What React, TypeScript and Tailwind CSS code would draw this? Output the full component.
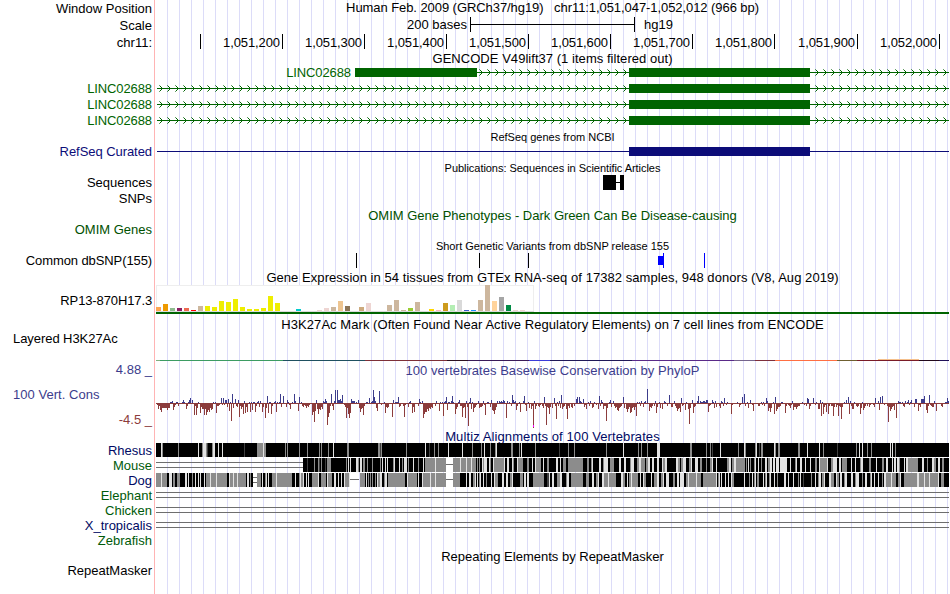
import type { ReactNode } from "react"

const TRACK_WIDTH = 793

const shades: Record<string, string> = { K: "#000000", G: "#8c8c8c", L: "#e2e2e2", D: "#404040" }

// run starts in px, each followed by its shade; "." leaves a gap
const rhesus =
  "0K 5L 6G 7K 22G 23K 42L 43K 46G 47L 50G 51D 52K 56G 57L 59K 62L 63K 66L 67K 88D 89K 101G 107L 108G 110K 129G 130K 131G 132K 143G 144K 151G 152K 163G 164K 165G 166K 172G 173K 177L 178K 191G 193K 222G 224D 225G 226K 250G 251K 269L 270K 273D 274K 278G 279K 282G 283K 292L 293K 306L 307K 316G 317K 325G 326K 328L 329K 334G 335K 339G 340L 341K 355G 357K 363G 364K 365L 366K 379G 380K 403D 404K 412G 413K 418G 419K 450G 451K 467L 468K 482G 483K 485G 486K 491G 492K 501L 504K 534G 536K 550G 551K 554G 555K 556D 557K 564L 565K 582G 583K 588L 589G 590K 599G 600L 601K 603D 604K 605G 607K 618L 619G 620K 622G 624K 642G 644K 651L 652K 663L 664K 667G 668K 681D 682K 700G 701K 703L 704K 706L 707K 711G 712K 715G 716K 734L 735K 736L 737K 739G 740K"
const mouse =
  "147K 151D 152K 158G 159K 162G 163D 164K 165G 166K 169D 170K 171G 175K 190G 191K 192L 193K 194L 195K 200L 202G 203K 204L 206K 207G 209K 211G 212K 216G 217K 224G 225K 226L 227K 229L 230K 231L 232K 237G 238L 239K 243L 244K 246G 247K 248L 251K 252G 253K 257L 258K 262G 263K 267L 268K 269G 279L 280G 290. 297G 304L 305G 310L 311G 315L 316G 320K 321G 322K 323G 324K 326L 327G 328L 331K 333L 334G 335K 337L 338G 348L 349K 351L 353K 356L 357G 358K 361L 362G 367K 371G 373K 376L 377K 379L 380G 385K 387L 388K 391G 393K 400L 402K 404L 405K 407G 410K 412G 427K 431G 433K 435G 436L 437K 443L 445K 447G 448L 452K 454G 458K 463L 465K 468L 470K 474G 475L 478K 481G 483L 485G 489K 490G 492L 494K 496L 498K 501L 503K 506L 507G 509L 511K 520L 522G 524K 525G 527L 530K 533G 535L 536K 539L 542K 544G 546K 550G 551K 554G 556L 557K 560L 561K 571G 573L 575K 576G 578L 580G 589K 590G 591K 592L 593K 594G 595K 598G 599L 600K 602L 603K 605G 606K 609L 611K 612G 614L 616K 617L 619K 620L 623K 624L 631K 634L 635K 639G 640L 641K 644L 646K 649L 650K 654L 655K 659G 661K 663L 664G 671L 672K 675G 677L 681K 683L 685K 686G 691K 695L 696K 699L 700K 704G 705L 707K 713G 715K 720L 721K 726G 728K 730L 732K 736L 737K 738L 740K 741L 743G 744K 748L 749K 750L 752G 762K 766L 768K 771G 772K 776L 778G 780K 782L 784K 786G 788K"
const dog =
  "0G 5L 6G 11K 13L 16K 17G 19K 21G 24K 29L 31K 32L 33K 36G 37K 39L 40K 42L 43K 44L 45K 48L 49K 50G 54L 55G 60L 61G 71K 73L 74G 77L 78G 81L 82G 90K 91L 93K 94G 95K 97. 101G 105K 106L 107K 109G 110L 111K 112L 113K 116G 120L 121G 136K 139L 140K 143G 144L 145G 147L 148K 150L 151K 152L 153K 156G 162L 163K 165G 170K 171L 172G 176K 178L 180K 182L 183K 185L 186K 188L 189G 193L 194. 204G 209K 210L 211K 212G 213K 214G 215K 216G 217K 219G 220K 221L 222G 224L 226K 228G 229L 231K 232G 249K 251L 252G 261K 262L 263K 266L 267G 274L 275G 279L 280G 290. 297G 304K 310L 311K 313L 315K 317G 319L 320K 321L 322K 323G 324L 325K 327L 328K 330G 331K 335L 336K 338L 339G 342K 346L 348K 350L 352K 354G 356L 357K 364G 367K 368L 370K 371L 373K 377G 388K 391D 393L 394K 396L 398K 401G 404L 406K 410G 411L 413K 415G 419G 427K 430G 433K 436L 438K 440G 442L 443K 446L 448G 452L 453G 460K 465L 467G 469K 471L 472K 473G 475L 476G 482K 484L 485K 487L 488G 490K 495L 496K 498G 501L 503K 505G 507L 508K 510L 513K 517G 519K 521L 523K 524L 528K 530G 532L 533G 540L 541G 545K 547G 560L 561K 562G 563L 564K 565L 566K 569L 570K 572L 573K 575L 576G 578K 588L 589K 593G 594K 596L 597K 598G 599L 600K 601G 603K 607L 608K 609G 610L 611K 613G 614L 615K 618L 619K 621G 622K 628L 630K 632L 633K 637L 638K 642G 643K 644L 645K 647D 648K 655G 656K 659L 660K 662G 663L 665K 666G 668L 669K 673L 675G 678K 680L 681G 683K 684L 686K 688G 689L 691K 695L 697K 699G 700L 703K 706G 707K 709L 711K 714G 715L 716K 718L 719K 722L 723K 726G 727K 728L 730G 735L 736G 740K 742G 744L 745K 748G 761L 763G 768L 769G 773L 774G 782L 783K 785G 788K"

// basewise conservation score, px:height, negative is drawn downwards
const phylop =
  "1:-2 2:-6 3:-3 4:-7 5:-9 6:-5 7:-5 8:-5 9:-5 10:-5 11:-7 12:-5 13:-5 14:1 15:1 16:2 17:-7 18:-4 19:-2 20:1 21:1 22:-3 26:1 27:3 28:1 30:-6 31:-3 32:1 33:3 34:5 36:3 38:-12 39:-3 40:-12 41:-5 42:1 44:-10 45:-4 46:-6 47:-6 48:-12 49:-6 50:-12 51:-9 52:-7 53:-9 54:-5 55:-7 56:-6 57:1 59:1 60:-10 61:-3 62:-3 63:-2 65:5 66:-2 67:5 68:-2 69:3 70:3 71:-4 72:4 73:-8 74:1 75:-18 76:9 77:-5 79:4 80:-3 81:-4 82:3 83:-14 84:-3 85:-6 86:-4 87:-11 88:2 89:-10 90:-4 91:-9 93:1 94:-9 95:1 96:-7 97:1 98:1 99:-9 100:-3 101:1 102:2 103:-4 104:2 106:-9 107:-4 109:-15 110:-5 111:7 112:-10 113:1 114:1 115:-11 116:-3 118:1 119:2 120:-9 121:1 123:1 124:9 125:-4 127:7 130:-4 131:3 132:1 133:-2 134:-6 136:1 138:9 139:2 142:-8 143:6 145:1 146:-3 147:-4 148:-2 149:-3 150:-5 151:-3 152:-4 153:-2 156:-12 157:-9 158:-19 159:-8 160:3 161:-6 162:-11 163:-6 164:-7 165:-4 166:-6 167:2 168:1 169:4 170:2 171:-22 172:-14 173:-10 174:-3 175:9 176:-3 177:-7 178:2 179:13 181:13 182:3 183:3 184:4 185:2 186:8 188:-2 189:-4 190:-15 191:-5 192:-11 193:-15 194:-10 195:4 196:2 197:2 198:2 200:1 202:3 203:-5 204:-9 205:-6 206:-5 207:-12 208:-3 210:1 211:1 213:5 215:1 216:2 217:13 218:6 219:2 220:-5 221:-8 223:12 225:-2 228:1 229:-10 230:-4 231:-5 232:-4 236:-14 237:3 239:1 240:1 241:1 242:6 243:-4 244:-3 247:-3 248:-14 249:-2 252:-4 253:1 254:2 256:-10 257:-4 258:-9 262:-3 263:4 264:1 266:2 267:-15 268:-11 269:-9 270:-9 271:-6 272:-8 273:-5 274:-6 275:-4 276:-5 279:-3 280:2 283:-8 284:1 286:1 287:-13 288:1 289:2 290:6 291:-7 292:1 293:1 295:2 296:7 297:1 299:-11 300:-6 301:-4 302:1 303:3 304:-3 305:-3 306:-14 307:-5 308:-4 309:-15 310:2 311:-4 312:-23 313:1 314:5 315:-6 316:1 317:-9 318:-5 319:-4 320:-2 322:2 323:-5 324:-4 325:-4 326:-3 327:2 328:-2 329:-12 331:1 332:1 334:-4 335:3 336:-7 337:-8 338:-11 339:-7 340:-4 341:2 343:2 344:1 345:2 346:1 347:3 348:2 350:-15 351:2 353:1 355:-3 356:8 357:3 358:1 359:2 360:-7 361:-3 363:1 364:-9 367:2 368:7 369:-2 370:-8 372:1 373:-5 375:-6 376:-3 377:-25 378:2 379:-6 380:-3 382:-3 383:-4 384:-2 386:-3 387:-5 388:6 389:-3 390:-22 391:-4 392:-5 393:-11 394:-4 396:-5 398:5 399:-3 400:-16 401:1 402:-3 403:2 404:-5 405:8 406:-6 407:-4 408:-3 410:-6 411:-16 412:-3 413:-5 415:-4 416:-5 418:-3 420:4 421:6 423:6 424:2 425:1 427:4 428:-4 429:-2 430:-6 432:1 433:-3 434:2 436:-5 437:-4 438:1 440:-2 442:-6 443:7 444:-3 445:3 446:1 447:-6 448:-3 449:-3 450:-18 451:-5 453:1 454:3 455:-4 457:2 458:-3 459:-5 460:-4 461:-7 462:-8 463:-5 464:-4 465:-3 467:6 468:-5 470:-6 471:-9 472:-6 473:-4 474:-10 475:-9 476:-5 477:-4 478:-7 479:-4 480:-13 481:1 483:1 484:-3 485:2 487:-4 488:1 489:2 491:14 493:-8 494:-4 495:-5 496:-3 498:-3 499:2 500:-10 501:-4 503:1 504:-5 506:-6 508:2 509:1 511:-3 513:8 515:-4 516:-4 518:2 519:-3 520:-5 521:-8 522:-6 523:-5 524:-9 525:5 526:-3 527:-2 529:-7 530:1 532:-6 533:-21 534:-5 536:3 537:-10 538:-4 539:-3 541:2 542:7 544:2 545:1 546:1 547:2 548:2 549:1 550:3 551:3 552:-9 553:-3 554:-2 556:3 557:1 558:-5 559:2 560:-4 563:-3 564:-5 565:2 566:1 567:-3 568:5 570:-2 571:1 575:-11 576:-2 581:1 583:-4 584:-2 586:6 588:9 589:-3 591:1 592:-5 594:3 596:-2 597:-8 602:-3 603:-3 605:1 606:-2 607:1 608:-3 610:5 611:2 612:-8 613:-5 614:-9 615:-5 617:1 618:-11 619:6 620:-8 621:-6 622:-4 623:-4 624:-3 625:1 626:1 629:-10 630:-3 632:-2 633:-3 634:-5 635:-2 636:2 637:-7 638:-4 639:-4 640:-6 641:-4 642:-3 643:-3 646:1 648:-2 650:-3 651:5 652:4 653:-6 654:-3 657:5 659:-2 660:1 662:-6 663:-6 664:3 665:-13 666:1 667:-11 668:-4 669:-2 670:-9 672:-11 673:-3 675:-3 676:-3 677:-13 678:-4 680:-4 681:-2 682:-13 683:-3 684:-4 685:-16 686:-4 688:1 690:3 692:6 693:-11 694:2 695:-3 696:-6 697:-6 698:1 700:-3 701:-4 702:-3 704:-11 705:-5 706:1 707:-7 708:-5 709:-3 711:-3 713:-4 714:-2 717:-2 718:-4 719:5 722:2 723:-7 724:6 726:7 728:-2 731:-3 732:-19 733:-4 734:-8 735:-6 736:-4 737:-3 738:-7 740:-15 742:2 743:1 744:1 746:1 747:-3 748:-4 749:2 751:1 752:3 753:-2 754:1 755:3 758:-4 759:4 760:4 762:-8 763:-2 764:-4 765:4 766:4 767:4 768:7 770:-7 771:-10 772:-3 773:8 774:-2 775:-3 776:-4 777:-4 778:2 780:-8 785:-3 786:-4 789:1 790:1 791:5 792:2"

const tissues: [number, string][] = [
  [4, "#ffa54f"], [7, "#ee9a00"], [3, "#8fbc8f"], [3, "#8b1c62"], [3, "#ee6a50"], [1, "#ff0000"],
  [5, "#cdb79e"], [5, "#eeee00"], [4, "#eeee00"], [10, "#eeee00"], [9, "#eeee00"], [12, "#eeee00"],
  [4, "#eeee00"], [2, "#eeee00"], [2, "#eeee00"], [3, "#eeee00"], [15, "#eeee00"], [8, "#eeee00"],
  [0, "#eeee00"], [0, "#eeee00"], [2, "#00cdcd"], [0, "#ee82ee"], [0, "#9ac0cd"], [1, "#eed5d2"],
  [3, "#eed5d2"], [4, "#cdb79e"], [10, "#eec591"], [5, "#8b7355"], [0, "#8b7355"], [4, "#cdaa7d"],
  [8, "#eed5d2"], [0, "#b452cd"], [0, "#7a378b"], [6, "#cdb79e"], [11, "#cdb79e"], [1, "#cdb79e"],
  [3, "#9acd32"], [9, "#cdb79e"], [0, "#7a67ee"], [2, "#ffd700"], [1, "#ffb6c1"], [8, "#cd9b1d"],
  [6, "#b4eeb4"], [11, "#d9d9d9"], [1, "#3a5fcd"], [1, "#1e90ff"], [11, "#cdb79e"], [26, "#cdb79e"],
  [10, "#ffd39b"], [14, "#a6a6a6"], [6, "#008b45"], [1, "#eed5d2"], [1, "#eed5d2"], [0, "#ff00ff"],
]

const h3k27ac: [number, string][] = [
  [0, "#7fae7f"], [4, "#3d9c62"], [127, "#1f5060"], [209, "#7e3038"], [291, "#2c1020"], [312, "#3a1a58"],
  [373, "#3c3cd8"], [394, "#201858"], [476, "#5a2a88"], [578, "#75648c"], [599, "#7e2f3c"],
  [619, "#ff6f42"], [681, "#6f6030"], [701, "#7a1c28"], [763, "#22081c"], [783, "#201058"],
]

const ticks = [
  [126, "1,051,200"], [208, "1,051,300"], [290, "1,051,400"], [372, "1,051,500"], [454, "1,051,600"],
  [536, "1,051,700"], [618, "1,051,800"], [701, "1,051,900"], [783, "1,052,000"],
] as const

function Row({ label, height, className = "", children }: { label?: string; height: string; className?: string; children?: ReactNode }) {
  return (
    <div className={`flex ${height}`}>
      <div className={`flex w-[156px] shrink-0 items-center justify-end pr-1 ${className}`}>{label}</div>
      <div className="w-[793px]">{children}</div>
    </div>
  )
}

function Title({ children, height, className = "" }: { children: ReactNode; height: string; className?: string }) {
  return (
    <Row height={height}>
      <div className={`flex h-full items-center justify-center whitespace-pre ${className}`}>{children}</div>
    </Row>
  )
}

function Canvas({ height, children }: { height: number; children: ReactNode }) {
  return (
    <svg className="block overflow-visible" width={TRACK_WIDTH} height={height} shapeRendering="crispEdges">
      {children}
    </svg>
  )
}

function Gene({ introns, exons }: { introns: [number, number][]; exons: [number, number][] }) {
  return (
    <Canvas height={16}>
      {introns.map(([from, to]) => (
        <g key={from} fill="#006400">
          <rect x={from} y={7} width={to - from} height={1} />
          {Array.from({ length: 99 }, (_, i) => 6 + i * 8)
            .filter((x) => x - 3 >= from && x < to)
            .map((x) => (
              <g key={x}>
                <path d={`M${x - 2} 5h1v1h1v1h1v1h-1v1h-1v1h-1v-1h1v-1h1v-1h-1v-1h-1z`} />
                <path d={`M${x - 3} 4h1v1h-1zM${x - 3} 10h1v1h-1z`} opacity={0.6} />
              </g>
            ))}
        </g>
      ))}
      {exons.map(([from, to]) => (
        <rect key={from} x={from} y={3} width={to - from} height={9} fill="#006400" />
      ))}
    </Canvas>
  )
}

function Alignment({ data }: { data: string }) {
  const runs = data.split(" ").map((t) => ({ x: parseInt(t), shade: t.slice(-1) }))
  return (
    <>
      {runs.map(({ x, shade }, i) =>
        shade === "." ? null : (
          <rect key={x} x={x} y={0} width={(runs[i + 1]?.x ?? TRACK_WIDTH) - x} height={14} fill={shades[shade]} />
        ),
      )}
    </>
  )
}

function DoubleLine({ from = 0, to = TRACK_WIDTH }) {
  return (
    <>
      <rect x={from} y={4} width={to - from} height={1} fill="#6e6e6e" />
      <rect x={from} y={9} width={to - from} height={1} fill="#6e6e6e" />
    </>
  )
}

function Conservation() {
  return (
    <Canvas height={50}>
      <rect x={0} y={24} width={TRACK_WIDTH} height={1} fill="#8c3c3c" />
      {phylop.split(" ").map((t) => {
        const [x, v] = t.split(":").map(Number)
        return v > 0 ? (
          <rect key={x} x={x} y={24 - v} width={1} height={v} fill="#3c3c8c" />
        ) : (
          <rect key={x} x={x} y={24} width={1} height={-v} fill="#8c3c3c" />
        )
      })}
      <rect x={377} y={46} width={1} height={2} fill="#ff00ff" />
    </Canvas>
  )
}

export default function App() {
  return (
    <div className="flex h-[594px] w-[950px] overflow-hidden bg-white font-['Liberation_Sans',Arial,sans-serif] text-[13px] leading-none">
      <div className="w-[949px] bg-[linear-gradient(to_right,#fff_154px,#ffb4b4_154px,#ffb4b4_155px,#fff_155px,#fff_156px,transparent_156px),repeating-linear-gradient(to_right,transparent_0px,transparent_11px,#dcdcf8_11px,#dcdcf8_12px)]">
        {/* Base position */}
        <Row label="Window Position" height="h-[17px]">
          <div className="flex h-[15px] items-center justify-center tracking-[-0.07px] whitespace-pre">
            {"Human Feb. 2009 (GRCh37/hg19)   chr11:1,051,047-1,052,012 (966 bp)"}
          </div>
        </Row>
        <Row label="Scale" height="h-[17px]">
          <Canvas height={17}>
            <text x={311} y={12} textAnchor="end">200 bases</text>
            <path d="M314 0h1v7h163v-7h1v15h-1v-7h-163v7h-1z" />
            <text x={488} y={12}>hg19</text>
          </Canvas>
        </Row>
        <Row label="chr11:" height="h-[17px]">
          <Canvas height={17}>
            <rect x={44} y={0} width={1} height={15} />
            {ticks.map(([x, text]) => (
              <g key={x}>
                <rect x={x} y={0} width={1} height={15} />
                <text className="tracking-[-0.1px]" x={x - 2} y={13} textAnchor="end">{text}</text>
              </g>
            ))}
          </Canvas>
        </Row>

        {/* Genes */}
        <Title height="h-[14px]" className="tracking-[0.04px]">GENCODE V49lift37 (1 items filtered out)</Title>
        <Row height="h-4">
          <div className="flex">
            <div className="w-0 text-[#006400]">
              <div className="w-[195px] pt-[1px] text-right leading-[14px] tracking-[-0.1px]">LINC02688</div>
            </div>
            <Gene introns={[[321, 473], [654, 793]]} exons={[[199, 321], [473, 654]]} />
          </div>
        </Row>
        {[0, 1, 2].map((i) => (
          <Row key={i} label="LINC02688" height="h-4" className="pb-[2px] tracking-[-0.1px] text-[#006400]">
            <Gene introns={[[1, 793]]} exons={[[473, 654]]} />
          </Row>
        ))}
        <Title height="h-[15px]" className="pt-[2px] text-[11px]">RefSeq genes from NCBI</Title>
        <Row label="RefSeq Curated" height="h-4" className="pb-[2px] tracking-[-0.06px] text-[#0c0c78]">
          <Canvas height={16}>
            <rect x={1} y={7} width={792} height={1} fill="#0c0c78" />
            <rect x={473} y={3} width={181} height={9} fill="#0c0c78" />
          </Canvas>
        </Row>

        {/* Literature and variants */}
        <Title height="h-4" className="tracking-[-0.04px] text-[11px]">Publications: Sequences in Scientific Articles</Title>
        <Row label="Sequences" height="h-[14px]" className="pb-[2px]">
          <Canvas height={14}>
            <rect x={447} y={-1} width={13} height={15} />
            <rect x={460} y={6} width={4} height={1} />
            <rect x={464} y={-1} width={4} height={15} />
          </Canvas>
        </Row>
        <Row label="SNPs" height="h-[17px]" />
        <Title height="h-[17px]" className="text-[#005000]">OMIM Gene Phenotypes - Dark Green Can Be Disease-causing</Title>
        <Row label="OMIM Genes" height="h-[13px]" className="pb-[2px] text-[#005000]" />
        <Title height="h-[17px]" className="pt-[2px] text-[11px]">Short Genetic Variants from dbSNP release 155</Title>
        <Row label="Common dbSNP(155)" height="h-[14px]" className="pb-[2px] tracking-[-0.1px]">
          <Canvas height={14}>
            <rect x={200} y={-1} width={1} height={15} />
            <rect x={323} y={-1} width={1} height={15} />
            <rect x={372} y={-1} width={1} height={15} />
            <rect x={502} y={2} width={5} height={9} fill="#0000ff" />
            <rect x={507} y={-1} width={1} height={15} fill="#0000ff" />
            <rect x={548} y={-1} width={1} height={15} fill="#0000ff" />
          </Canvas>
        </Row>

        {/* Expression */}
        <Title height="h-[17px]" className="pt-[2px] tracking-[0.055px]">Gene Expression in 54 tissues from GTEx RNA-seq of 17382 samples, 948 donors (V8, Aug 2019)</Title>
        <Row label="RP13-870H17.3" height="h-[29px]" className="pt-[2px] tracking-[-0.12px]">
          <Canvas height={29}>
            <rect x={0} y={0} width={378} height={27} fill="#eeeeee" />
            <rect x={1} y={1} width={376} height={25} fill="#ffffff" />
            <rect x={0} y={26} width={378} height={1} fill="#dcdcdc" />
            {tissues.map(([h, fill], i) => (
              <rect key={i} x={i * 7} y={26 - h} width={5} height={h} fill={fill} />
            ))}
            <rect x={0} y={27} width={TRACK_WIDTH} height={2} fill="#006400" />
          </Canvas>
        </Row>

        {/* Regulation */}
        <Title height="h-[20px]" className="tracking-[0.055px]">H3K27Ac Mark (Often Found Near Active Regulatory Elements) on 7 cell lines from ENCODE</Title>
        <div className="flex h-[27px]">
          <div className="w-[156px] pl-[13px] leading-[9px] tracking-[-0.06px]">Layered H3K27Ac</div>
          <Canvas height={27}>
            {h3k27ac.map(([x, fill], i) => (
              <rect key={x} x={x} y={26} width={(h3k27ac[i + 1]?.[0] ?? TRACK_WIDTH) - x} height={1} fill={fill} />
            ))}
            <rect x={722} y={25} width={41} height={1} fill="#f5c08c" />
          </Canvas>
        </div>

        {/* Conservation */}
        <Row label="4.88 _" height="h-[18px]" className="pb-[2px] text-[#3c3c8c]">
          <div className="flex h-full items-center justify-center tracking-[0.04px] text-[#3c3c8c]">100 vertebrates Basewise Conservation by PhyloP</div>
        </Row>
        <div className="flex h-[50px]">
          <div className="flex w-[156px] flex-col justify-between pt-[9px] pr-1 pb-[3px] pl-[13px]">
            <span className="tracking-[0.04px] text-[#3c3c8c]">100 Vert. Cons</span>
            <span className="text-right text-[#8c3c3c]">-4.5 _</span>
          </div>
          <Conservation />
        </div>
        <Title height="h-[14px]" className="tracking-[0.1px] text-[#000a64]">Multiz Alignments of 100 Vertebrates</Title>
        <Row label="Rhesus" height="h-[15px]" className="text-[#000a64]">
          <Canvas height={15}>
            <Alignment data={rhesus} />
          </Canvas>
        </Row>
        <Row label="Mouse" height="h-[15px]" className="text-[#005a0a]">
          <Canvas height={15}>
            <DoubleLine to={147} />
            <Alignment data={mouse} />
            <rect x={290} y={6} width={7} height={1} fill="#6e6e6e" />
          </Canvas>
        </Row>
        <Row label="Dog" height="h-[15px]" className="text-[#000a64]">
          <Canvas height={15}>
            <Alignment data={dog} />
            <DoubleLine from={97} to={101} />
            <rect x={194} y={6} width={9} height={1} fill="#6e6e6e" />
            <rect x={290} y={6} width={7} height={1} fill="#6e6e6e" />
          </Canvas>
        </Row>
        <Row label="Elephant" height="h-[15px]" className="text-[#005a0a]">
          <Canvas height={15}><DoubleLine /></Canvas>
        </Row>
        <Row label="Chicken" height="h-[15px]" className="text-[#005a0a]">
          <Canvas height={15}><DoubleLine /></Canvas>
        </Row>
        <Row label="X_tropicalis" height="h-[15px]" className="text-[#000a64]">
          <Canvas height={15}><DoubleLine /></Canvas>
        </Row>
        <Row label="Zebrafish" height="h-[15px]" className="text-[#005a0a]" />

        {/* Repeats */}
        <Title height="h-4">Repeating Elements by RepeatMasker</Title>
        <Row label="RepeatMasker" height="h-[14px]" className="pb-[2px]" />
      </div>
    </div>
  )
}
